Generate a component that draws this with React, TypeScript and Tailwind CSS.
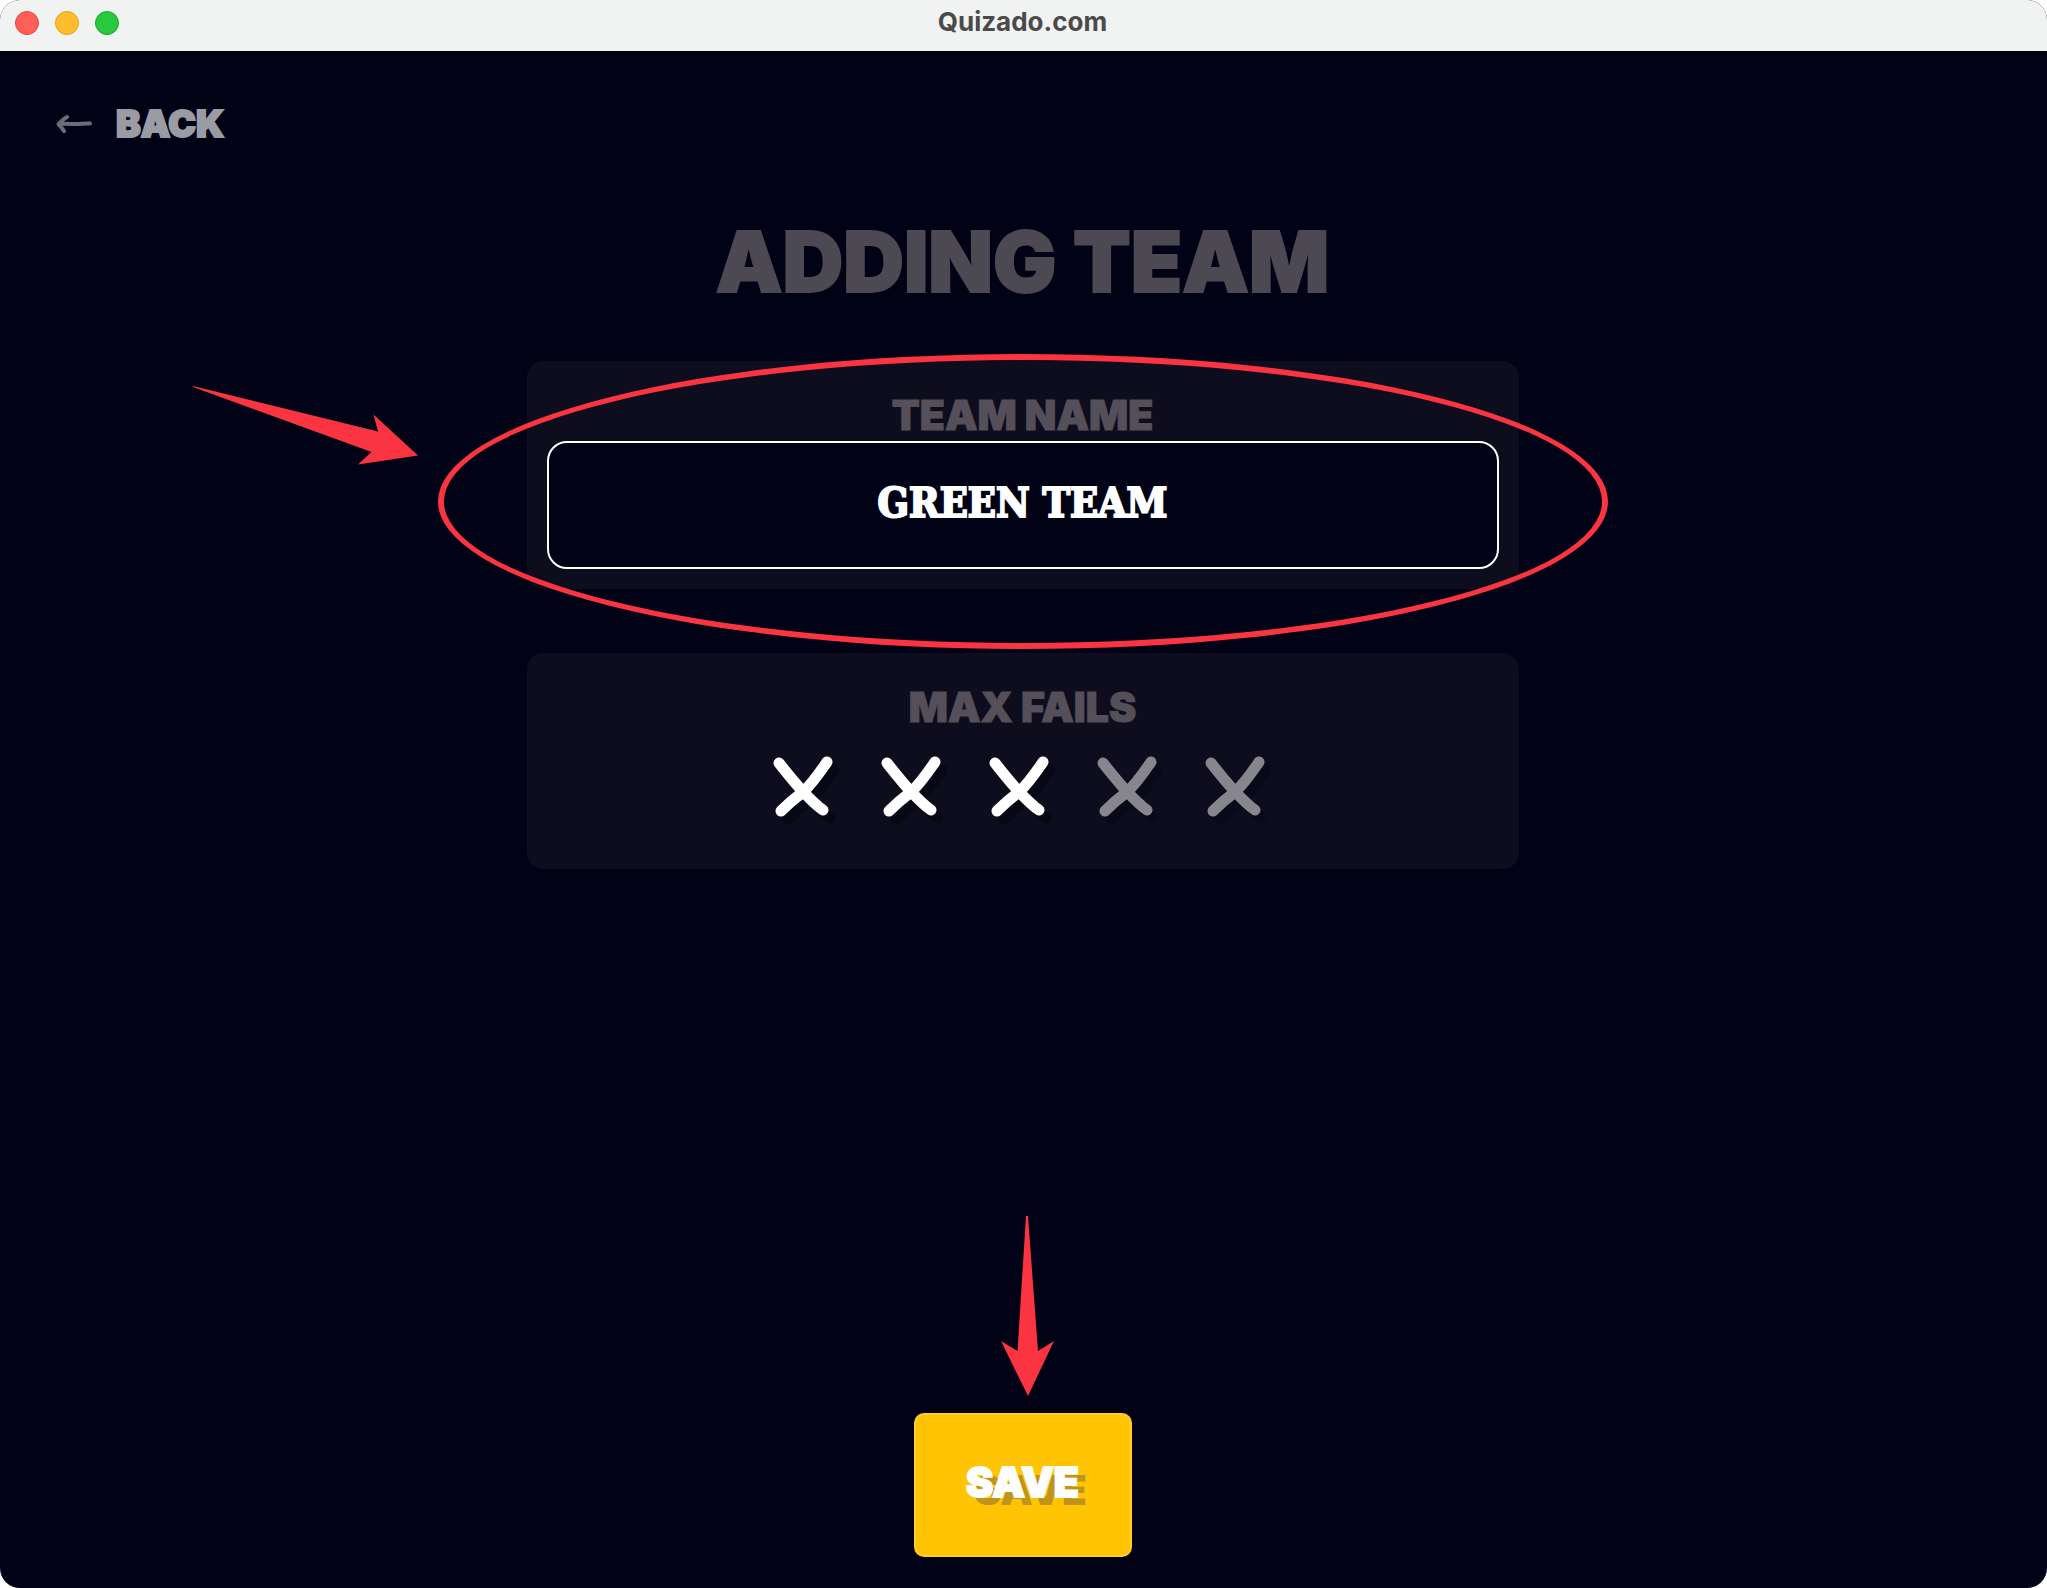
const fails = [true, true, true, false, false];

function TitleBar() {
  return (
    <header className="relative flex h-[51px] shrink-0 items-center justify-center bg-[#f1f3f3] pr-0.5">
      <div className="absolute left-[15px] top-[11px] flex gap-4">
        <button aria-label="Close" className="size-6 rounded-full border border-[#e2463f] bg-[#ff5f57]" />
        <button aria-label="Minimize" className="size-6 rounded-full border border-[#e1a116] bg-[#febc2e]" />
        <button aria-label="Zoom" className="size-6 rounded-full border border-[#12ac28] bg-[#28c840]" />
      </div>
      <h1 className="pb-2 text-[26px] leading-8 font-bold text-[#4a4a4a]">Quizado.com</h1>
    </header>
  );
}

function BackArrow() {
  return (
    <svg width="36" height="20" viewBox="0 0 36 20" fill="none" stroke="#6c6d79" strokeWidth="4" strokeLinecap="round" strokeLinejoin="round" aria-hidden="true">
      <path d="M11 3 C8 4.500 5 7 2.500 10 C4 12 6 14 8 17 M4 10 C10 9.500 14 10 20 10 C25 10 29 9 34 9.500" />
    </svg>
  );
}

function Cross() {
  return (
    <svg width="80" height="80" viewBox="0 0 80 80" fill="none" strokeWidth="11" strokeLinecap="round" strokeLinejoin="round" aria-hidden="true">
      <g stroke="#020512" strokeOpacity="0.6" transform="translate(7 8)">
        <path d="M12 17 C20 27 27 36 35 44.500 C42 52 50 60 56 64 M60 16 C53 26 45 38 36 46 C28 52 20 59 14 65" />
      </g>
      <path stroke="#ffffff" d="M12 17 C20 27 27 36 35 44.500 C42 52 50 60 56 64 M60 16 C53 26 45 38 36 46 C28 52 20 59 14 65" />
    </svg>
  );
}

export default function App() {
  return (
    <div className="min-h-screen bg-white font-['Inter',sans-serif]">
      <div className="flex min-h-screen flex-col overflow-hidden rounded-[20px] bg-[#010216]">
        <TitleBar />
        <main className="flex flex-1 flex-col items-center border-t-2 border-black pr-0.5 pb-[31px]">
          <a
            href="#back"
            className="mt-[51px] ml-14 flex items-center gap-6 self-start text-[37px] leading-10 font-black text-[#9a9ba3] [-webkit-text-stroke:2px_#9a9ba3]"
          >
            <BackArrow />
            BACK
          </a>

          <h2 className="mt-[70px] text-[84px] leading-[96px] font-black text-[#4d4952] [-webkit-text-stroke:2px_#4d4952]">ADDING TEAM</h2>

          <section className="relative mt-[51px] w-full max-w-[992px] rounded-2xl bg-[#0e0d1d] px-5 pt-[30px] pb-5">
            <label
              htmlFor="team-name"
              className="mb-0.5 block text-center text-[41px] leading-[48px] font-black text-[#554f59] [-webkit-text-stroke:1px_#554f59]"
            >
              TEAM NAME
            </label>
            <input
              id="team-name"
              defaultValue="GREEN TEAM"
              className="block h-32 w-full rounded-[20px] border-2 border-white bg-[#010216] pb-1 text-center font-['DejaVu_Serif_Condensed','DejaVu_Serif',serif] text-[41px] font-bold text-white outline-none [-webkit-text-stroke:2px_#ffffff]"
            />
            <div className="pointer-events-none absolute -inset-x-[89px] -top-[7px] -bottom-[60px] rounded-[50%] border-6 border-[#fb3441]" />
            <svg className="pointer-events-none absolute top-[23px] -left-[336px]" width="230" height="84" viewBox="0 0 230 84" aria-hidden="true">
              <path d="M2 2 L187 47.500 L182.500 30.500 L227 71.500 L167 80.500 L180.500 68 L2 3 Z" fill="#fb3441" />
            </svg>
          </section>

          <section className="mt-16 flex w-full max-w-[992px] flex-col items-center rounded-2xl bg-[#0e0d1d] pt-[30px] pb-[43px]">
            <h3 className="text-[41px] leading-[48px] font-black text-[#554f59] [-webkit-text-stroke:1px_#554f59]">MAX FAILS</h3>
            <div className="mt-[15px] flex gap-7">
              {fails.map((on, i) => (
                <button key={i} aria-label={`${i + 1} fails`} aria-pressed={on} className={on ? "size-20" : "size-20 opacity-50"}>
                  <Cross />
                </button>
              ))}
            </div>
          </section>

          <div className="relative mt-auto">
            <svg className="pointer-events-none absolute -top-[198px] left-[86px]" width="56" height="184" viewBox="0 0 56 184" aria-hidden="true">
              <path d="M26 1 L28 1 L38 136 L54 126 L28 181 L1 126 L17.500 136 Z" fill="#fb3441" />
            </svg>
            <button className="h-36 w-[218px] rounded-[10px] border-2 border-[#ffcc28] bg-[#ffc505] pb-1 text-[41px] font-black text-white [-webkit-text-stroke:2px_#ffffff] [text-shadow:8px_8px_0_#c0941a]">
              SAVE
            </button>
          </div>
        </main>
      </div>
    </div>
  );
}
